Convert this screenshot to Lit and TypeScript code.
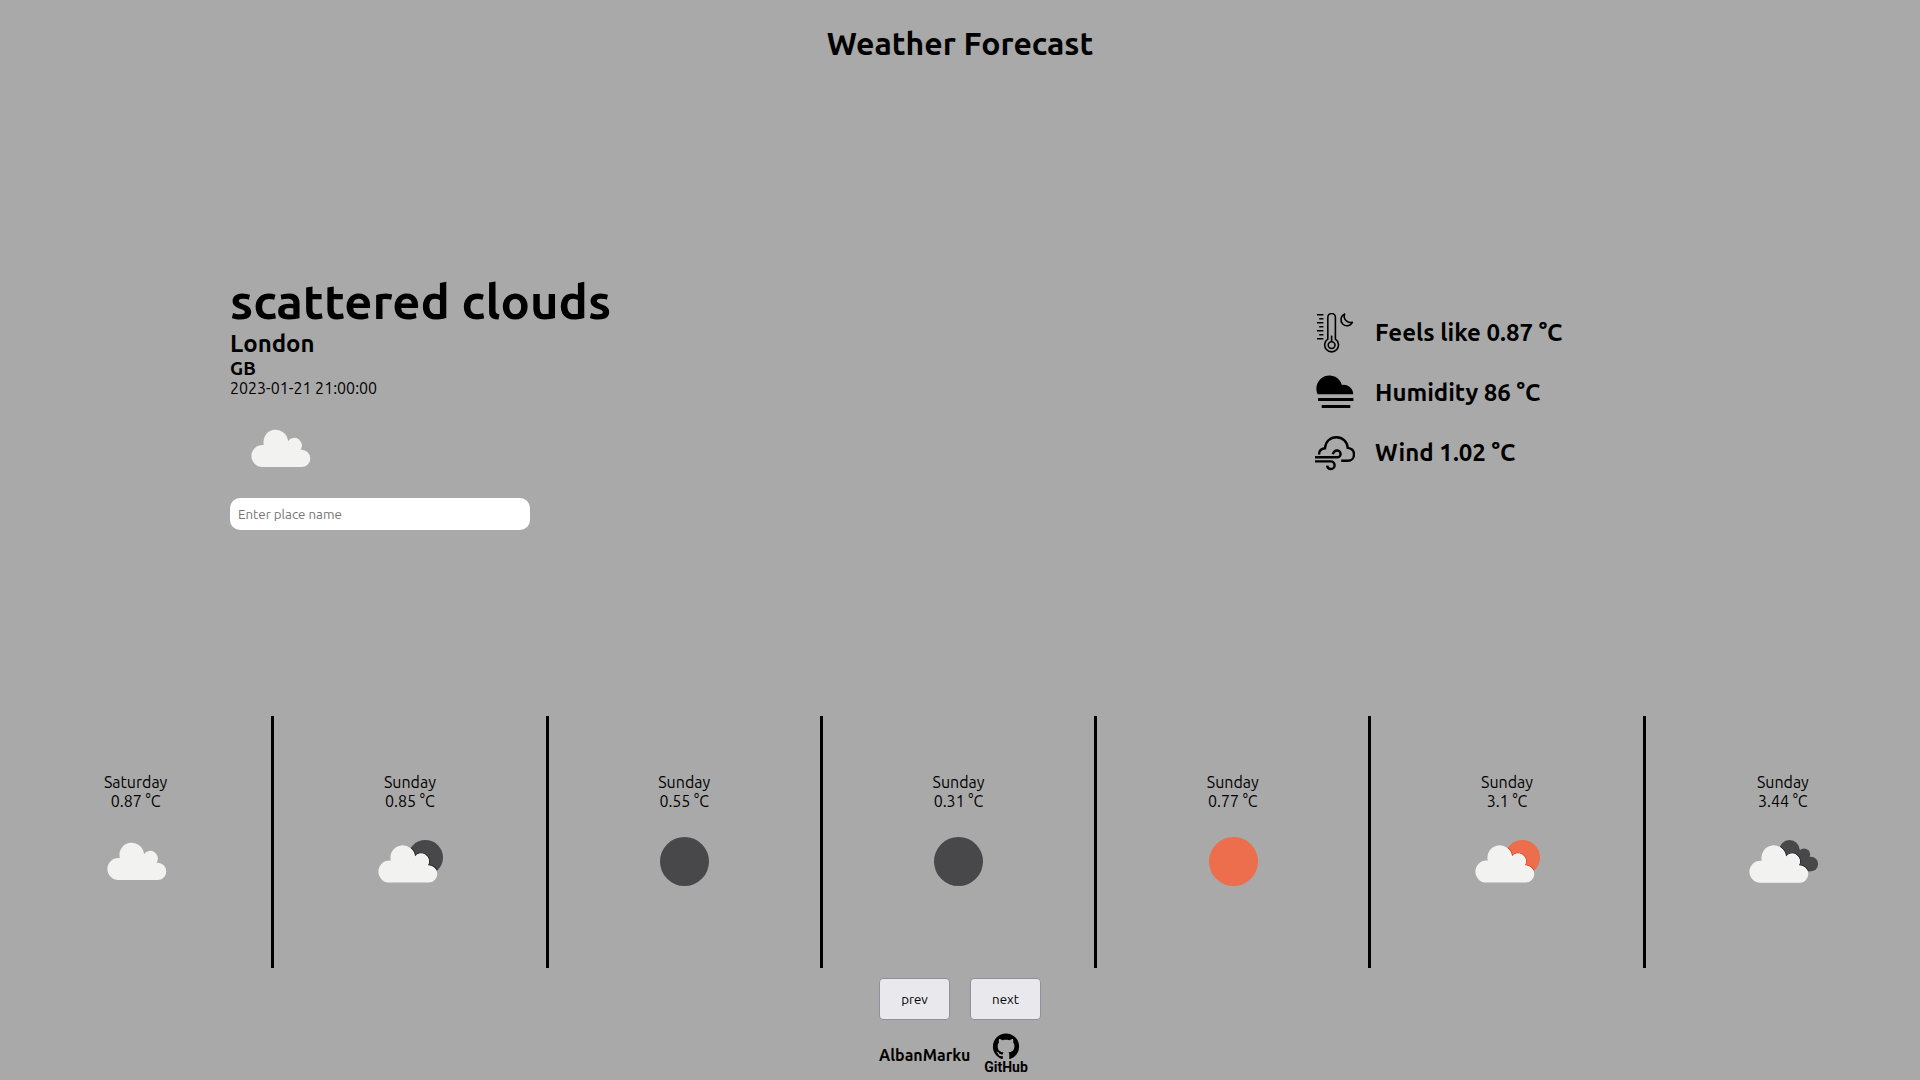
import { LitElement, html, svg, css } from "lit";
import { customElement, property } from "lit/decorators.js";

type Sky = "clear-day" | "clear-night" | "few-day" | "few-night" | "scattered" | "broken";

interface Slot {
  day: string;
  temperature: string;
  sky: Sky;
}

const SLOTS: Slot[] = [
  { day: "Saturday", temperature: "0.87", sky: "scattered" },
  { day: "Sunday", temperature: "0.85", sky: "few-night" },
  { day: "Sunday", temperature: "0.55", sky: "clear-night" },
  { day: "Sunday", temperature: "0.31", sky: "clear-night" },
  { day: "Sunday", temperature: "0.77", sky: "clear-day" },
  { day: "Sunday", temperature: "3.1", sky: "few-day" },
  { day: "Sunday", temperature: "3.44", sky: "broken" },
];

const CLOUD =
  "M32.4 69a11 11 0 0 1 0-22h1.4a12.3 12.3 0 1 1 24.2-3.8a7.6 7.6 0 0 1 12.6 8.6h1.1a8.6 8.6 0 0 1 0 17.2z";

const DARK = "#48484a";
const SUN = "#ec6e4c";

@customElement("sky-icon")
class SkyIcon extends LitElement {
  @property() sky: Sky = "scattered";

  static styles = css`
    :host {
      display: block;
    }
    .sky {
      display: block;
      width: 100px;
      height: 100px;
    }
  `;

  private disc(fill: string) {
    return svg`<circle cx="50.5" cy="50.5" r="24.5" fill=${fill}></circle>`;
  }

  private cloud(dx: number, dy: number) {
    return svg`<path d=${CLOUD} transform=${`translate(${dx} ${dy})`} fill="#f2f2f0"></path>`;
  }

  private discBehind(fill: string, edge: string) {
    return svg`
      <clipPath id="behind"><circle cx="65.4" cy="46.6" r="17.6"></circle></clipPath>
      <circle cx="65.4" cy="46.6" r="17.6" fill=${fill}></circle>
      <g clip-path="url(#behind)">
        <path d=${CLOUD} transform="translate(-3 2.6)" fill="none" stroke=${edge} stroke-width="1.6"></path>
      </g>
      ${this.cloud(-3, 2.6)}
      <g clip-path="url(#behind)">
        <path d=${CLOUD} transform="translate(-3.4 3)" fill="none" stroke="#ffffff" stroke-width="0.8"></path>
      </g>`;
  }

  private cloudBehind() {
    const shapes = svg`
      <circle cx="56.5" cy="39.2" r="10.2"></circle>
      <circle cx="71" cy="43.6" r="6.2"></circle>
      <circle cx="77.8" cy="53" r="7.3"></circle>
      <path d="M50 40L66 38L76 46L77.8 60.3H56z"></path>`;
    return svg`
      <clipPath id="rear">
        <circle cx="56.5" cy="39.2" r="10.2"></circle>
        <circle cx="71" cy="43.6" r="6.2"></circle>
        <circle cx="77.8" cy="53" r="7.3"></circle>
        <path d="M50 40L66 38L76 46L77.8 60.3H56z"></path>
      </clipPath>
      <g fill=${DARK}>${shapes}</g>
      <g clip-path="url(#rear)">
        <path d=${CLOUD} transform="translate(-5 2.7)" fill="none" stroke="#232324" stroke-width="1.6"></path>
      </g>
      ${this.cloud(-5, 2.7)}
      <g clip-path="url(#rear)">
        <path d=${CLOUD} transform="translate(-5.4 3.1)" fill="none" stroke="#ffffff" stroke-width="0.8"></path>
      </g>`;
  }

  private drawing() {
    switch (this.sky) {
      case "clear-day":
        return this.disc(SUN);
      case "clear-night":
        return this.disc(DARK);
      case "few-day":
        return this.discBehind(SUN, "#e0401c");
      case "few-night":
        return this.discBehind(DARK, "#232324");
      case "broken":
        return this.cloudBehind();
      default:
        return this.cloud(0, 0);
    }
  }

  render() {
    return html`<svg class="sky" viewBox="0 0 100 100" aria-hidden="true">${this.drawing()}</svg>`;
  }
}

const THERMOMETER = svg`
  <g fill="none" stroke="#000" stroke-width="1.6">
    <path d="M12.8 26.2V4.3a3.8 3.8 0 0 1 7.6 0V26.2a6.9 6.9 0 1 1-7.6 0z"></path>
    <circle cx="16.6" cy="32.1" r="3.4"></circle>
    <path d="M16.6 28.7V22.6"></path>
    <path d="M2 1.7H8.4M4.2 5.7H8.4M2 9.7H8.4M4.2 13.7H8.4M2 17.7H8.4M4.2 21.7H8.4M2 25.7H8.4"></path>
    <path d="M29.6 .9A6 6.2 0 1 0 37.4 9.2A6.4 6.4 0 0 1 29.6 .9z" stroke-linejoin="round"></path>
  </g>`;

const HUMIDITY = svg`
  <path d="M2.6 21.2A13.1 13.1 0 1 1 27 11.9A9.6 9.6 0 0 1 38.2 21.2z"></path>
  <path d="M3 25H38.4V28H3zM6.7 32H35.3V35H6.7z"></path>`;

const WIND = svg`
  <g fill="none" stroke="#000" stroke-width="2.4">
    <path d="M4 21.6C4 17.6 6.4 15.6 10 15.3C10.4 8.6 15 4.2 21.4 4.2S32.4 8.8 32.8 14.9C36.6 15.4 39 18 39 21.4C39 25 36.4 27.8 32.8 27.8H26.2"></path>
    <path d="M0 24.3H22.2a3.3 3.3 0 0 0 0-6.8c-2.4 0-3.8 1.4-4.4 3.8"></path>
    <path d="M0 28.4H15.8a3.8 3.8 0 0 1 0 7.6c-2 0-3.4-1.4-3.6-3.4"></path>
  </g>`;

const READINGS = [
  { label: "Feels like", value: "0.87", icon: THERMOMETER },
  { label: "Humidity", value: "86", icon: HUMIDITY },
  { label: "Wind", value: "1.02", icon: WIND },
];

@customElement("app-root")
class AppRoot extends LitElement {
  static styles = css`
    :host {
      display: grid;
      grid-template-rows: 86px 1fr 252px 112px;
      min-height: 100vh;
      background: #a9a9a9;
      color: #000;
      font-family: Ubuntu, "Noto Sans", sans-serif;
      font-size: 16px;
      line-height: 19px;
    }
    *,
    *::before,
    *::after {
      box-sizing: border-box;
    }
    h1,
    h2,
    h3,
    p,
    ul,
    ol {
      margin: 0;
      padding: 0;
      list-style: none;
    }
    .header {
      display: flex;
      align-items: center;
      justify-content: center;
    }
    .title {
      font-size: 32px;
      line-height: 37px;
    }
    .current {
      display: grid;
      grid-template-columns: 1fr 1fr;
      align-items: center;
      justify-items: center;
    }
    .place {
      width: 100%;
      max-width: 500px;
    }
    .condition {
      font-size: 49px;
      font-weight: bold;
      line-height: 58px;
    }
    .city {
      font-size: 24px;
      line-height: 28px;
    }
    .country {
      font-size: 19px;
      line-height: 21px;
    }
    .search {
      display: block;
      width: 300px;
      height: 32px;
      padding: 0 8px;
      border: 0;
      border-radius: 10px;
      background: #fff;
      font-family: inherit;
    }
    .search::placeholder {
      color: #757575;
      opacity: 1;
    }
    .readings {
      width: 250px;
      padding-top: 4px;
    }
    .reading {
      display: flex;
      align-items: center;
      gap: 20px;
      margin-bottom: 20px;
      font-size: 24px;
      font-weight: bold;
      line-height: 28px;
      white-space: nowrap;
    }
    .reading-icon {
      flex: none;
      width: 40px;
      height: 40px;
    }
    .forecast {
      display: grid;
      grid-template-columns: repeat(7, 1fr);
    }
    .slot {
      display: flex;
      flex-direction: column;
      align-items: center;
      justify-content: center;
      border-right: 3px solid #000;
    }
    .slot:last-child {
      border-right: 0;
    }
    .footer {
      display: flex;
      flex-direction: column;
      align-items: center;
      padding-top: 10px;
      gap: 10px;
    }
    .pager {
      display: flex;
      gap: 20px;
    }
    .page {
      width: 71px;
      height: 42px;
      padding: 0;
      border: 1px solid #8f8f9d;
      border-radius: 4px;
      background: #e9e9ed;
      color: #000;
      font-family: inherit;
    }
    .credit {
      display: flex;
      align-items: center;
      gap: 11px;
      width: 162px;
      font-weight: bold;
    }
    .author {
      color: inherit;
      text-decoration: none;
    }
    .github {
      display: block;
      width: 50px;
      height: 50px;
    }
    .wordmark {
      font-family: Roboto, sans-serif;
      font-size: 14px;
      font-weight: bold;
    }
  `;

  render() {
    return html`
      <header class="header"><h1 class="title">Weather Forecast</h1></header>
      <main class="current">
        <section class="place">
          <p class="condition">scattered clouds</p>
          <h2 class="city">London</h2>
          <h3 class="country">GB</h3>
          <p>2023-01-21 21:00:00</p>
          <sky-icon sky="scattered"></sky-icon>
          <input class="search" type="text" aria-label="Place name" placeholder="Enter place name" />
        </section>
        <ul class="readings">
          ${READINGS.map(
            (r) => html`<li class="reading">
              <svg class="reading-icon" viewBox="0 0 40 40" aria-hidden="true">${r.icon}</svg>
              <span>${r.label} ${r.value} °C</span>
            </li>`
          )}
        </ul>
      </main>
      <ol class="forecast">
        ${SLOTS.map(
          (s) => html`<li class="slot">
            <p>${s.day}</p>
            <p>${s.temperature} °C</p>
            <sky-icon sky=${s.sky}></sky-icon>
          </li>`
        )}
      </ol>
      <footer class="footer">
        <div class="pager">
          <button class="page" type="button">prev</button>
          <button class="page" type="button">next</button>
        </div>
        <div class="credit">
          <a class="author" href="#author">AlbanMarku</a>
          <a href="#github" aria-label="GitHub">
            <svg class="github" viewBox="0 0 50 50">
              <path
                transform="translate(11.9 3.5) scale(1.64)"
                d="M8 0C3.58 0 0 3.58 0 8c0 3.54 2.29 6.53 5.47 7.59.4.07.55-.17.55-.38 0-.19-.01-.82-.01-1.49-2.01.37-2.53-.49-2.69-.94-.09-.23-.48-.94-.82-1.13-.28-.15-.68-.52-.01-.53.63-.01 1.08.58 1.23.82.72 1.21 1.87.87 2.33.66.07-.52.28-.87.51-1.07-1.78-.2-3.64-.89-3.64-3.95 0-.87.31-1.59.82-2.15-.08-.2-.36-1.02.08-2.12 0 0 .67-.21 2.2.82.64-.18 1.32-.27 2-.27s1.36.09 2 .27c1.53-1.04 2.2-.82 2.2-.82.44 1.1.16 1.92.08 2.12.51.56.82 1.27.82 2.15 0 3.07-1.87 3.75-3.65 3.95.29.25.54.73.54 1.48 0 1.07-.01 1.93-.01 2.2 0 .21.15.46.55.38A8.01 8.01 0 0 0 16 8c0-4.42-3.58-8-8-8z"
              ></path>
              <text class="wordmark" x="25" y="42" text-anchor="middle">GitHub</text>
            </svg>
          </a>
        </div>
      </footer>
    `;
  }
}
